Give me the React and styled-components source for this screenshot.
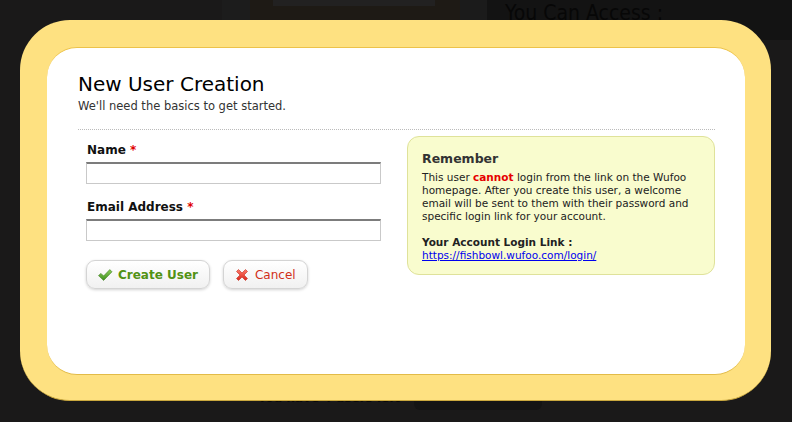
import styled, { createGlobalStyle } from 'styled-components'

const GlobalStyle = createGlobalStyle`
  html, body {
    margin: 0;
    padding: 0;
    background: #1a1919;
    font-family: "DejaVu Sans", "Liberation Sans", sans-serif;
  }
`;

const CheckIcon = () => (
  <svg width="16" height="16" viewBox="0 0 16 16">
    <defs>
      <linearGradient id="chk" x1="0" y1="0" x2="0" y2="1">
        <stop offset="0" stopColor="#8ed05a" />
        <stop offset="1" stopColor="#3f8f1e" />
      </linearGradient>
    </defs>
    <path d="M1.5 8.6 L4 6.4 L6.6 9 L12.8 2.6 L15 4.8 L6.6 13.4 Z" fill="url(#chk)" stroke="#3a7a1c" strokeWidth="0.6" strokeLinejoin="round" />
  </svg>
);

const CrossIcon = () => (
  <svg width="16" height="16" viewBox="0 0 16 16">
    <defs>
      <linearGradient id="crs" x1="0" y1="0" x2="0" y2="1">
        <stop offset="0" stopColor="#ff7a6a" />
        <stop offset="1" stopColor="#d8261a" />
      </linearGradient>
    </defs>
    <path d="M2.5 4.5 L4.5 2.5 L8 6 L11.5 2.5 L13.5 4.5 L10 8 L13.5 11.5 L11.5 13.5 L8 10 L4.5 13.5 L2.5 11.5 L6 8 Z" fill="url(#crs)" stroke="#c22a1c" strokeWidth="0.6" strokeLinejoin="round" />
  </svg>
);

const App = () => {
  return (
    <>
      <GlobalStyle />
      <Stage>
        <TopStrip>
          <StripBlock w={222} bg="#1a1919" />
          <StripBlock w={28} bg="#1c1c1c" />
          <StripBlock w={210} bg="#1e1a15">
            <TabStub />
          </StripBlock>
          <StripBlock w={27} bg="#1b1b1b" />
          <AccessHead>You Can Access :</AccessHead>
        </TopStrip>
        <BottomStrip>
          <UsersLeft>You have 4 users left</UsersLeft>
          <UpgradeStub />
        </BottomStrip>

        <Modal>
          <Sheet>
            <Header>
              <Title>New User Creation</Title>
              <Subtitle>We'll need the basics to get started.</Subtitle>
            </Header>
            <Columns>
              <FormColumn>
                <Field>
                  <Label>Name <Req>*</Req></Label>
                  <TextInput type="text" />
                </Field>
                <Field>
                  <Label>Email Address <Req>*</Req></Label>
                  <TextInput type="text" />
                </Field>
                <Buttons>
                  <Button tone="positive"><CheckIcon />Create User</Button>
                  <Button tone="negative"><CrossIcon />Cancel</Button>
                </Buttons>
              </FormColumn>
              <InfoBox>
                <InfoTitle>Remember</InfoTitle>
                <InfoText>
                  This user <Warn>cannot</Warn> login from the link on the Wufoo homepage. After you create this user, a welcome email will be sent to them with their password and specific login link for your account.
                </InfoText>
                <InfoText>
                  <b>Your Account Login Link :</b><br />
                  <LoginLink href="#">https://fishbowl.wufoo.com/login/</LoginLink>
                </InfoText>
              </InfoBox>
            </Columns>
          </Sheet>
        </Modal>
      </Stage>
    </>
  )
}
export default App

const Stage = styled.div`
  position: relative;
  width: 792px;
  height: 422px;
  overflow: hidden;
  display: flex;
  flex-direction: column;
  justify-content: space-between;
`;

const TopStrip = styled.div`
  display: flex;
  height: 40px;
`;

const StripBlock = styled.div`
  width: ${p => p.w}px;
  background: ${p => p.bg};
`;

const TabStub = styled.div`
  margin-left: 23px;
  width: 162px;
  height: 6px;
  background: #222121;
`;

const AccessHead = styled.div`
  flex: 1;
  background: #131313;
  color: #070707;
  font-size: 21px;
  padding: 1px 0 0 18px;
  font-family: "DejaVu Sans Condensed", "DejaVu Sans", sans-serif;
`;

const BottomStrip = styled.div`
  display: flex;
  align-items: center;
  gap: 14px;
  padding: 0 0 12px 258px;
`;

const UsersLeft = styled.div`
  color: #080808;
  font-size: 12px;
  font-weight: bold;
`;

const UpgradeStub = styled.div`
  width: 128px;
  height: 25px;
  background: #141414;
  border-radius: 6px;
`;

const Modal = styled.div`
  position: absolute;
  left: 20px;
  top: 20px;
  width: 751px;
  height: 381px;
  box-sizing: border-box;
  padding: 27px 26px 25px 27px;
  background: #fee181;
  border-radius: 50px;
  border-bottom: 1px solid #caa83e;
`;

const Sheet = styled.div`
  height: 100%;
  box-sizing: border-box;
  background: #fff;
  border-radius: 30px;
  border-top: 1px solid #ecc24a;
  border-bottom: 1px solid #e2bb48;
  padding: 22px 30px 0 31px;
`;

const Header = styled.div`
  padding-bottom: 16px;
  border-bottom: 1px dotted #bbb;
`;

const Title = styled.h1`
  margin: 0;
  font-size: 20px;
  font-weight: normal;
  line-height: 28px;
  color: #000;
`;

const Subtitle = styled.p`
  margin: 1px 0 0;
  font-size: 11.5px;
  line-height: 14px;
  color: #333;
`;

const Columns = styled.div`
  display: flex;
  justify-content: space-between;
  align-items: flex-start;
`;

const FormColumn = styled.div`
  width: 295px;
  padding: 13px 0 0 8px;
  display: flex;
  flex-direction: column;
  gap: 16px;
`;

const Field = styled.div`
  display: flex;
  flex-direction: column;
  gap: 4px;
`;

const Label = styled.label`
  font-size: 12px;
  font-weight: bold;
  color: #111;
  line-height: 15px;
  padding-left: 1px;
`;

const Req = styled.span`
  color: #df0000;
`;

const TextInput = styled.input`
  box-sizing: border-box;
  width: 295px;
  height: 22px;
  margin: 0;
  border: 1px solid #c9c9c9;
  border-top: 2px solid #7c7c7c;
  background: #fff;
  outline: none;
`;

const Buttons = styled.div`
  display: flex;
  gap: 13px;
  margin-top: 3px;
`;

const Button = styled.button`
  display: flex;
  align-items: center;
  gap: 5px;
  height: 29px;
  box-sizing: border-box;
  padding: 0 11px 0 10px;
  border: 1px solid #d4d4d4;
  border-radius: 9px;
  background: linear-gradient(#ffffff, #f1f1f1);
  box-shadow: 0 1px 3px rgba(0, 0, 0, 0.18);
  font-family: "DejaVu Sans", sans-serif;
  font-size: 12px;
  font-weight: ${p => (p.tone === 'positive' ? 'bold' : 'normal')};
  color: ${p => (p.tone === 'positive' ? '#529214' : '#d12f19')};
  cursor: pointer;
`;

const InfoBox = styled.div`
  width: 308px;
  box-sizing: border-box;
  margin-top: 6px;
  padding: 13px 10px 12px 14px;
  background: #f9fcce;
  border: 1px solid #dfe29a;
  border-radius: 12px;
  color: #222;
`;

const InfoTitle = styled.h3`
  margin: 0 0 4px;
  font-size: 12.5px;
  font-weight: bold;
  line-height: 17px;
  color: #333;
`;

const InfoText = styled.p`
  margin: 0 0 13px;
  font-size: 10.5px;
  line-height: 13px;
  &:last-child {
    margin-bottom: 0;
  }
`;

const Warn = styled.b`
  color: #e60000;
`;

const LoginLink = styled.a`
  color: #0000ee;
  text-decoration: underline;
`;
